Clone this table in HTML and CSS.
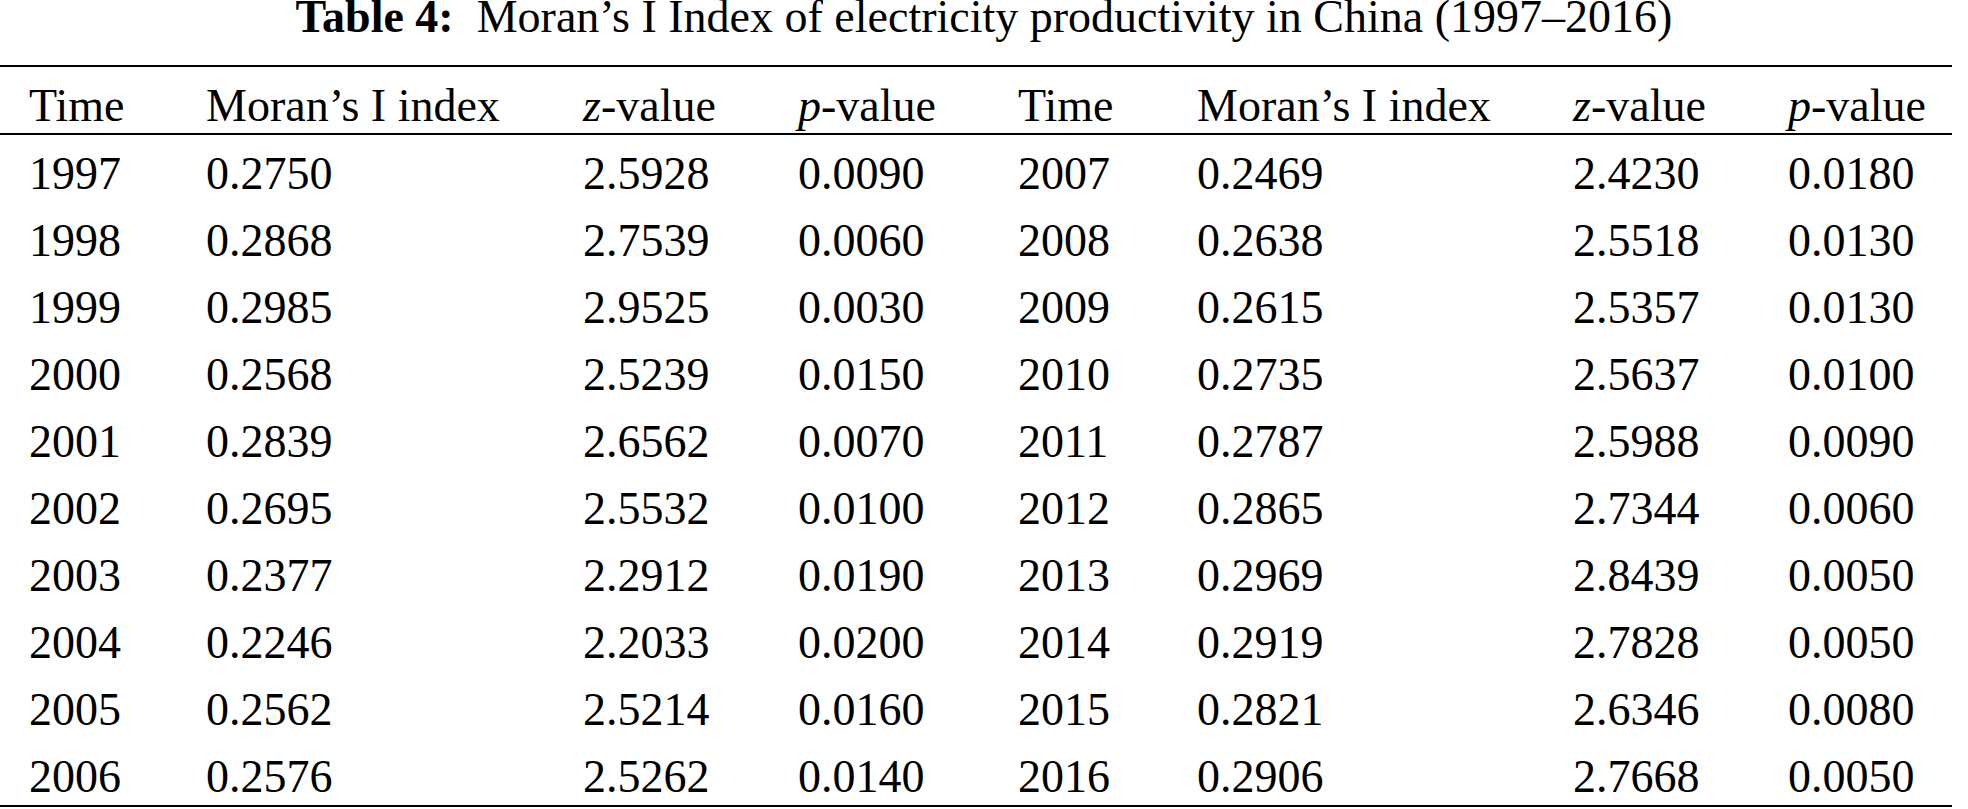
FILE: index.html
```html
<!DOCTYPE html>
<html>
<head>
<meta charset="utf-8">
<link rel="stylesheet" href="styles.css">
</head>
<body>
<div class="page">
  <div class="caption"><b>Table 4:</b>&nbsp; Moran’s I Index of electricity productivity in China (1997–2016)</div>
  <div class="table">
    <div class="row head">
      <span>Time</span><span>Moran’s I index</span><span><i>z</i>-value</span><span><i>p</i>-value</span>
      <span>Time</span><span>Moran’s I index</span><span><i>z</i>-value</span><span><i>p</i>-value</span>
    </div>
    <div class="body">
      <div class="row"><span>1997</span><span>0.2750</span><span>2.5928</span><span>0.0090</span><span>2007</span><span>0.2469</span><span>2.4230</span><span>0.0180</span></div>
      <div class="row"><span>1998</span><span>0.2868</span><span>2.7539</span><span>0.0060</span><span>2008</span><span>0.2638</span><span>2.5518</span><span>0.0130</span></div>
      <div class="row"><span>1999</span><span>0.2985</span><span>2.9525</span><span>0.0030</span><span>2009</span><span>0.2615</span><span>2.5357</span><span>0.0130</span></div>
      <div class="row"><span>2000</span><span>0.2568</span><span>2.5239</span><span>0.0150</span><span>2010</span><span>0.2735</span><span>2.5637</span><span>0.0100</span></div>
      <div class="row"><span>2001</span><span>0.2839</span><span>2.6562</span><span>0.0070</span><span>2011</span><span>0.2787</span><span>2.5988</span><span>0.0090</span></div>
      <div class="row"><span>2002</span><span>0.2695</span><span>2.5532</span><span>0.0100</span><span>2012</span><span>0.2865</span><span>2.7344</span><span>0.0060</span></div>
      <div class="row"><span>2003</span><span>0.2377</span><span>2.2912</span><span>0.0190</span><span>2013</span><span>0.2969</span><span>2.8439</span><span>0.0050</span></div>
      <div class="row"><span>2004</span><span>0.2246</span><span>2.2033</span><span>0.0200</span><span>2014</span><span>0.2919</span><span>2.7828</span><span>0.0050</span></div>
      <div class="row"><span>2005</span><span>0.2562</span><span>2.5214</span><span>0.0160</span><span>2015</span><span>0.2821</span><span>2.6346</span><span>0.0080</span></div>
      <div class="row"><span>2006</span><span>0.2576</span><span>2.5262</span><span>0.0140</span><span>2016</span><span>0.2906</span><span>2.7668</span><span>0.0050</span></div>
    </div>
  </div>
</div>
</body>
</html>
```
FILE: styles.css
```css
html, body {
  margin: 0;
  padding: 0;
  background: #fff;
}
body {
  font-family: "Liberation Serif", "Times New Roman", serif;
  color: #000;
}
.page {
  width: 1968px;
}
.caption {
  text-align: center;
  font-size: 46px;
  line-height: 33px;
  margin-bottom: 32px;
  white-space: nowrap;
}
.table {
  width: 1952px;
  border-top: 2px solid #000;
  border-bottom: 2px solid #000;
}
.row {
  display: grid;
  grid-template-columns: 177px 377px 215px 220px 179px 376px 215px 1fr;
  padding: 13px 0 3px 29px;
  font-size: 46px;
  line-height: 51px;
  white-space: nowrap;
}
.row.head {
  padding-bottom: 2px;
  border-bottom: 2px solid #000;
}
```
